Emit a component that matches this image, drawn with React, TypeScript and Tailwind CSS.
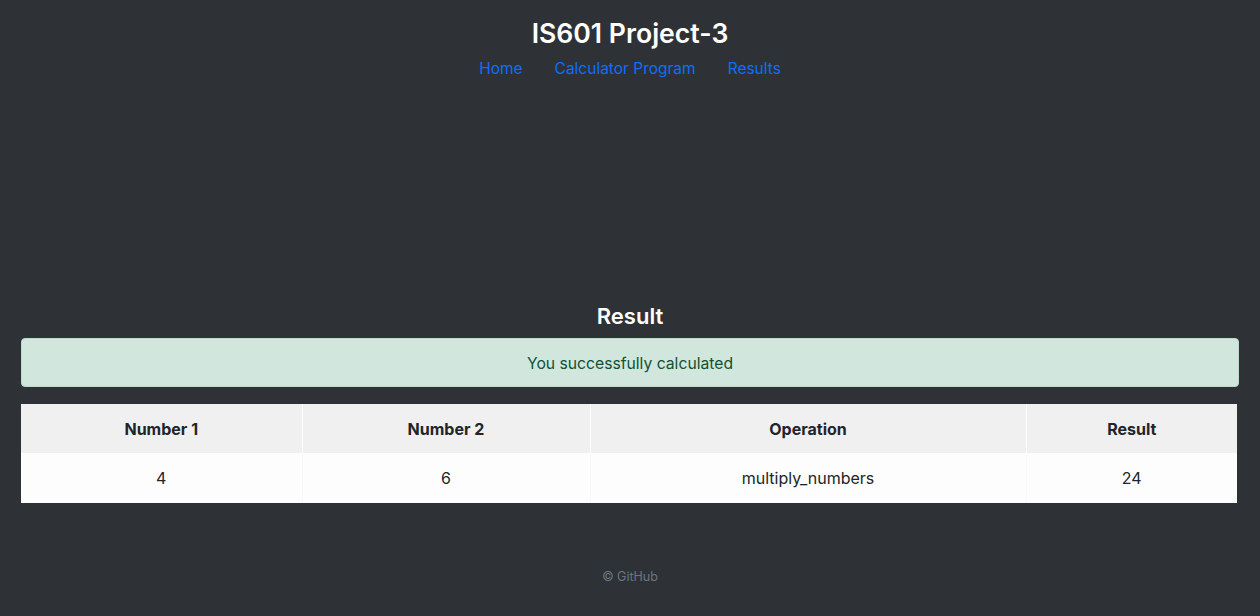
const rows = [{ a: "4", b: "6", op: "multiply_numbers", r: "24" }];

function Header() {
  return (
    <header className="flex flex-col items-center">
      <h1 className="mt-[16px] text-[26.6px] leading-[34px] font-semibold text-white">IS601 Project-3</h1>
      <nav className="mt-[7px] flex gap-[32px] text-[15.5px] leading-[24px] text-[#0d6efd]">
        <a href="#">Home</a>
        <a href="#">Calculator Program</a>
        <a href="#">Results</a>
      </nav>
    </header>
  );
}

function ResultTable() {
  return (
    <table className="mx-[21px] mt-[17px] w-[1216px] border-collapse text-[16px] text-[#212529]">
      <colgroup>
        <col className="w-[281px]" />
        <col className="w-[288px]" />
        <col className="w-[436px]" />
        <col className="w-[211px]" />
      </colgroup>
      <thead>
        <tr className="h-[49px] bg-[#f0f0f0] font-semibold">
          <th className="border-r border-white">Number 1</th>
          <th className="border-r border-white">Number 2</th>
          <th className="border-r border-white">Operation</th>
          <th>Result</th>
        </tr>
      </thead>
      <tbody>
        {rows.map((row, i) => (
          <tr key={i} className="h-[50px] bg-[#fdfdfd] text-center">
            <td className="border-r border-[#f8f8f8]">{row.a}</td>
            <td className="border-r border-[#f8f8f8]">{row.b}</td>
            <td className="border-r border-[#f8f8f8]">{row.op}</td>
            <td>{row.r}</td>
          </tr>
        ))}
      </tbody>
    </table>
  );
}

export default function App() {
  return (
    <div className="min-h-[616px] bg-[#2e3236] font-['Inter',sans-serif]">
      <Header />
      <main className="flex flex-col">
        <h2 className="mt-[220px] text-center text-[22px] leading-[30px] font-semibold text-white">Result</h2>
        <div className="mx-[21px] mt-[7px] flex h-[49px] items-center justify-center rounded-[4px] border border-[#badbcc] bg-[#d1e7dd] pt-[2px] text-[15.7px] text-[#0f5132]">
          You successfully calculated
        </div>
        <ResultTable />
      </main>
      <footer className="mt-[65px] text-center text-[12.5px] leading-[18px] text-[#6c757d]">© GitHub</footer>
    </div>
  );
}
